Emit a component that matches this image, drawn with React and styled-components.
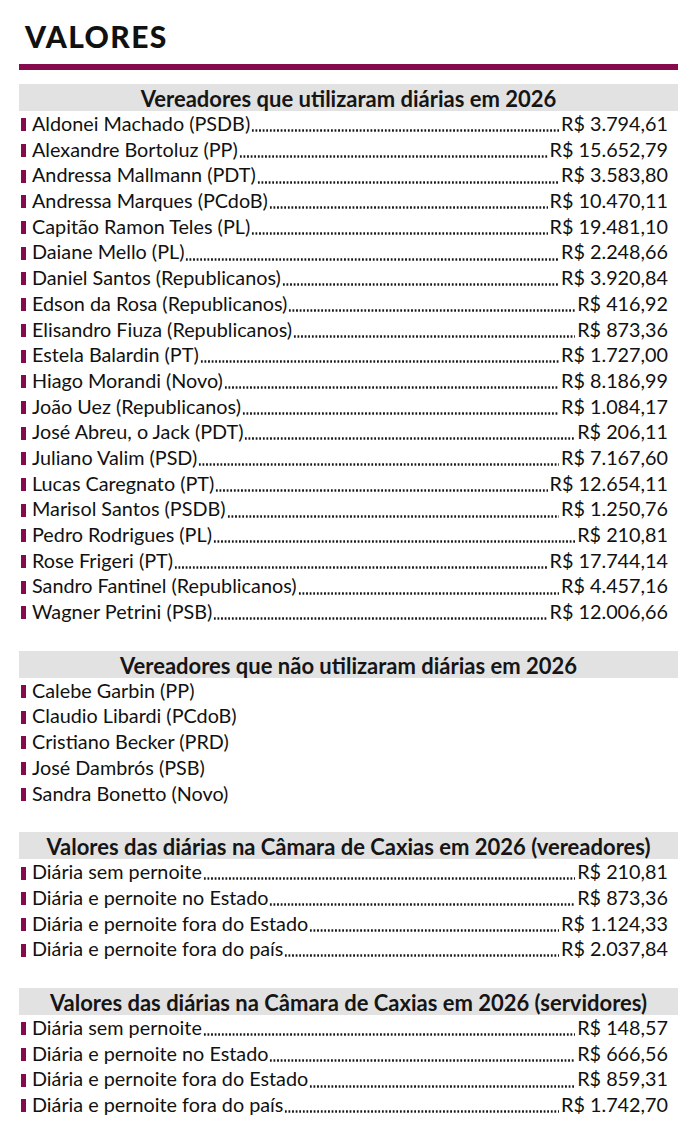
import React from 'react';
import styled, { createGlobalStyle } from 'styled-components';

const GlobalStyle = createGlobalStyle`
  body {
    margin: 0;
    background: #ffffff;
    font-family: Lato, "Open Sans", sans-serif;
    color: #111111;
  }
`;

const usaram = [
  ['Aldonei Machado (PSDB)', 'R$ 3.794,61'],
  ['Alexandre Bortoluz (PP)', 'R$ 15.652,79'],
  ['Andressa Mallmann (PDT)', 'R$ 3.583,80'],
  ['Andressa Marques (PCdoB)', 'R$ 10.470,11'],
  ['Capitão Ramon Teles (PL)', 'R$ 19.481,10'],
  ['Daiane Mello (PL)', 'R$ 2.248,66'],
  ['Daniel Santos (Republicanos)', 'R$ 3.920,84'],
  ['Edson da Rosa (Republicanos)', 'R$ 416,92'],
  ['Elisandro Fiuza (Republicanos)', 'R$ 873,36'],
  ['Estela Balardin (PT)', 'R$ 1.727,00'],
  ['Hiago Morandi (Novo)', 'R$ 8.186,99'],
  ['João Uez (Republicanos)', 'R$ 1.084,17'],
  ['José Abreu, o Jack (PDT)', 'R$ 206,11'],
  ['Juliano Valim (PSD)', 'R$ 7.167,60'],
  ['Lucas Caregnato (PT)', 'R$ 12.654,11'],
  ['Marisol Santos (PSDB)', 'R$ 1.250,76'],
  ['Pedro Rodrigues (PL)', 'R$ 210,81'],
  ['Rose Frigeri (PT)', 'R$ 17.744,14'],
  ['Sandro Fantinel (Republicanos)', 'R$ 4.457,16'],
  ['Wagner Petrini (PSB)', 'R$ 12.006,66'],
];

const naoUsaram = [
  'Calebe Garbin (PP)',
  'Claudio Libardi (PCdoB)',
  'Cristiano Becker (PRD)',
  'José Dambrós (PSB)',
  'Sandra Bonetto (Novo)',
];

const vereadores = [
  ['Diária sem pernoite', 'R$ 210,81'],
  ['Diária e pernoite no Estado', 'R$ 873,36'],
  ['Diária e pernoite fora do Estado', 'R$ 1.124,33'],
  ['Diária e pernoite fora do país', 'R$ 2.037,84'],
];

const servidores = [
  ['Diária sem pernoite', 'R$ 148,57'],
  ['Diária e pernoite no Estado', 'R$ 666,56'],
  ['Diária e pernoite fora do Estado', 'R$ 859,31'],
  ['Diária e pernoite fora do país', 'R$ 1.742,70'],
];

// linha com nome, pontilhado e valor
const ValueRow = ({ name, value }) => (
  <Row>
    <Bullet />
    <Name>{name}</Name>
    <Leader aria-hidden="true" />
    <Value>{value}</Value>
  </Row>
);

const Page = () => {
  return (
    <Wrapper>
      <GlobalStyle />
      <Title>VALORES</Title>
      <Rule />

      <Section>
        <Heading>Vereadores que utilizaram diárias em 2026</Heading>
        {usaram.map(([name, value]) => (
          <ValueRow key={name} name={name} value={value} />
        ))}
      </Section>

      <Section>
        <Heading>Vereadores que não utilizaram diárias em 2026</Heading>
        {naoUsaram.map((name) => (
          <Row key={name}>
            <Bullet />
            <Name>{name}</Name>
          </Row>
        ))}
      </Section>

      <Section>
        <Heading>Valores das diárias na Câmara de Caxias em 2026 (vereadores)</Heading>
        {vereadores.map(([name, value]) => (
          <ValueRow key={name} name={name} value={value} />
        ))}
      </Section>

      <Section>
        <Heading>Valores das diárias na Câmara de Caxias em 2026 (servidores)</Heading>
        {servidores.map(([name, value]) => (
          <ValueRow key={name} name={name} value={value} />
        ))}
      </Section>
    </Wrapper>
  );
};

const Wrapper = styled.div`
  width: 659px;
  margin-left: 19px;
  padding-top: 18px;
  padding-bottom: 20px;
`;

const Title = styled.h1`
  margin: 0 0 0 6px;
  font-family: Lato, sans-serif;
  font-weight: 900;
  font-size: 30px;
  line-height: 36px;
  letter-spacing: 1.4px;
  color: #111111;
`;

const Rule = styled.div`
  height: 6px;
  margin-top: 10px;
  background-color: #860b4d;
`;

const Section = styled.section`
  margin-top: 14px;

  & + & {
    margin-top: 26px;
  }
`;

const Heading = styled.h2`
  margin: 0;
  height: 27px;
  background-color: #e2e2e2;
  font-family: Lato, sans-serif;
  font-weight: 700;
  font-size: 22px;
  line-height: 29px;
  text-align: center;
  color: #151515;
`;

const Row = styled.div`
  display: flex;
  align-items: baseline;
  height: 25.7px;
  padding: 0 10px 0 2px;
  font-size: 19.8px;
  line-height: 25.7px;
  white-space: nowrap;
`;

const Bullet = styled.span`
  display: inline-block;
  flex: none;
  width: 5px;
  height: 13px;
  margin-right: 6px;
  background-color: #860b4d;
  align-self: center;
  transform: translateY(1px);
`;

const Name = styled.span`
  flex: none;
`;

const Leader = styled.span`
  flex: 1;
  min-width: 0;
  align-self: stretch;
  margin: 0 2px 0 1px;
  background-image: radial-gradient(circle, #151515 1px, transparent 1.35px);
  background-size: 3.6px 3px;
  background-repeat: repeat-x;
  background-position: 0 18.2px;
`;

const Value = styled.span`
  flex: none;
`;

export default Page;
